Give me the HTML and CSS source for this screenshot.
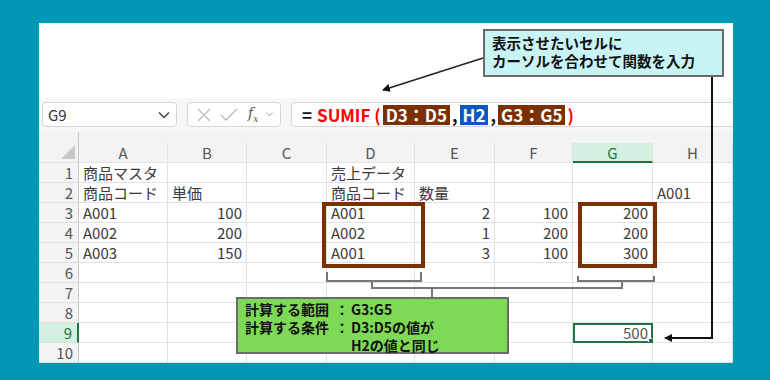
FILE: index.html
```html
<!DOCTYPE html>
<html lang="ja">
<head>
    <meta charset="UTF-8">
    <title>SUMIF</title>
    <link rel="stylesheet" href="styles.css">
</head>
<body>

<div class="frame">
    <div class="top"></div>

    <div class="fbar">
        <div class="namebox">
            <span>G9</span>
            <svg width="12" height="8" viewBox="0 0 12 8"><polyline points="1,1.5 6,6.5 11,1.5" fill="none" stroke="#444" stroke-width="1.5"/></svg>
        </div>
        <div class="fxbox">
            <svg width="16" height="16" viewBox="0 0 16 16"><path d="M2 2 L14 14 M14 2 L2 14" stroke="#bbb" stroke-width="1.3"/></svg>
            <svg width="18" height="16" viewBox="0 0 18 16"><polyline points="1,8 6,13 17,2" fill="none" stroke="#bbb" stroke-width="1.3"/></svg>
            <span class="fx">f<sub>x</sub></span>
            <svg width="7" height="5" viewBox="0 0 7 5"><polyline points="0.5,0.5 3.5,4 6.5,0.5" fill="none" stroke="#aaa" stroke-width="1"/></svg>
        </div>
        <div class="formula">
            <span class="eq">=</span>
            <span class="fn">SUMIF (</span>
            <span class="ref brown">D3：D5</span><span class="comma">,</span><span class="ref blue">H2</span><span class="comma">,</span><span class="ref brown">G3：G5</span>
            <span class="fn close">)</span>
        </div>
    </div>

    <div class="band"><div class="band-corner"></div></div>

    <div class="sheet">
        <div class="corner"></div>
        <div class="colhead">A</div>
        <div class="colhead">B</div>
        <div class="colhead">C</div>
        <div class="colhead">D</div>
        <div class="colhead">E</div>
        <div class="colhead">F</div>
        <div class="colhead active">G</div>
        <div class="colhead">H</div>

        <div class="rowhead">1</div>
        <div class="cell">商品マスタ</div><div class="cell"></div><div class="cell"></div>
        <div class="cell">売上データ</div><div class="cell"></div><div class="cell"></div><div class="cell"></div><div class="cell"></div>

        <div class="rowhead">2</div>
        <div class="cell">商品コード</div><div class="cell">単価</div><div class="cell"></div>
        <div class="cell">商品コード</div><div class="cell">数量</div><div class="cell"></div><div class="cell"></div><div class="cell">A001</div>

        <div class="rowhead">3</div>
        <div class="cell">A001</div><div class="cell num">100</div><div class="cell"></div>
        <div class="cell">A001</div><div class="cell num">2</div><div class="cell num">100</div><div class="cell num">200</div><div class="cell"></div>

        <div class="rowhead">4</div>
        <div class="cell">A002</div><div class="cell num">200</div><div class="cell"></div>
        <div class="cell">A002</div><div class="cell num">1</div><div class="cell num">200</div><div class="cell num">200</div><div class="cell"></div>

        <div class="rowhead">5</div>
        <div class="cell">A003</div><div class="cell num">150</div><div class="cell"></div>
        <div class="cell">A001</div><div class="cell num">3</div><div class="cell num">100</div><div class="cell num">300</div><div class="cell"></div>

        <div class="rowhead">6</div>
        <div class="cell"></div><div class="cell"></div><div class="cell"></div><div class="cell"></div><div class="cell"></div><div class="cell"></div><div class="cell"></div><div class="cell"></div>
        <div class="rowhead">7</div>
        <div class="cell"></div><div class="cell"></div><div class="cell"></div><div class="cell"></div><div class="cell"></div><div class="cell"></div><div class="cell"></div><div class="cell"></div>
        <div class="rowhead">8</div>
        <div class="cell"></div><div class="cell"></div><div class="cell"></div><div class="cell"></div><div class="cell"></div><div class="cell"></div><div class="cell"></div><div class="cell"></div>

        <div class="rowhead active">9</div>
        <div class="cell"></div><div class="cell"></div><div class="cell"></div><div class="cell"></div><div class="cell"></div><div class="cell"></div>
        <div class="cell num selected">500</div><div class="cell"></div>

        <div class="rowhead">10</div>
        <div class="cell"></div><div class="cell"></div><div class="cell"></div><div class="cell"></div><div class="cell"></div><div class="cell"></div><div class="cell"></div><div class="cell"></div>
    </div>

    <!-- annotations over the sheet -->
    <div class="range range-d"></div>
    <div class="range range-g"></div>

    <svg class="lines" width="694" height="340" viewBox="0 0 694 340">
        <defs>
            <marker id="head" markerWidth="8" markerHeight="8" refX="7" refY="4" orient="auto" markerUnits="userSpaceOnUse">
                <path d="M0 0 L8 4 L0 8 Z" fill="#111"/>
            </marker>
        </defs>
        <line x1="444" y1="35" x2="344" y2="67" stroke="#222" stroke-width="1.5" marker-end="url(#head)"/>
        <polyline points="673,54 673,315 626,315" fill="none" stroke="#111" stroke-width="2" marker-end="url(#head)"/>
        <polyline points="288,249 288,258 382,258 382,249" fill="none" stroke="#777" stroke-width="2"/>
        <polyline points="539,253 539,258 615,258 615,253" fill="none" stroke="#777" stroke-width="2"/>
        <polyline points="333,258 333,265 583,265 583,258" fill="none" stroke="#777" stroke-width="2"/>
        <line x1="393" y1="265" x2="393" y2="274" stroke="#777" stroke-width="2"/>
    </svg>

    <div class="note note-cyan">
        <div>表示させたいセルに</div>
        <div>カーソルを合わせて関数を入力</div>
    </div>

    <div class="note note-green">
        <span>計算する範囲</span><span class="colon">：</span><span>G3:G5</span>
        <span>計算する条件</span><span class="colon">：</span><span>D3:D5の値が</span>
        <span></span><span></span><span>H2の値と同じ</span>
    </div>
</div>

</body>
</html>
```

FILE: styles.css
```css
body {
    margin: 0;
    background-color: #0097b2;
    font-family: "Noto Sans CJK JP", "Noto Sans", sans-serif;
}
.frame {
    position: relative;
    width: 694px;
    height: 340px;
    margin: 23px 0 0 39px;
    background-color: #fff;
    overflow: hidden;
}
.top {
    height: 75px;
}
.fbar {
    height: 34px;
    box-sizing: border-box;
    padding: 4px 0 0 3px;
    display: flex;
    gap: 10px;
    background-color: #f7f7f7;
}
.namebox,
.fxbox,
.formula {
    height: 25px;
    box-sizing: border-box;
    background-color: #fff;
    border: 1px solid #d6d6d6;
    border-radius: 4px;
    display: flex;
    align-items: center;
}
.namebox {
    width: 135px;
    padding: 0 6px 0 5px;
    justify-content: space-between;
    font-size: 15px;
    color: #333;
}
.fxbox {
    width: 94px;
    padding: 0 4px 0 8px;
    gap: 8px;
}
.fx {
    font-family: "DejaVu Serif", serif;
    font-style: italic;
    font-size: 14px;
    color: #555;
    margin-left: 2px;
}
.fx sub {
    font-size: 9px;
}
.formula {
    flex: 1;
    margin-right: -6px;
    padding-left: 10px;
    font-weight: bold;
    font-size: 17px;
    white-space: pre;
}
.eq {
    color: #111;
    margin-right: 5px;
}
.fn {
    color: #f00;
    margin-right: 2px;
}
.fn.close {
    margin-left: 2px;
}
.ref {
    color: #fff;
    padding: 0 3px;
    line-height: 20px;
}
.brown {
    background-color: #7b3003;
}
.blue {
    background-color: #0b58c2;
}
.comma {
    color: #111;
    margin: 0 2px;
}
.band {
    height: 11px;
    background-color: #f3f3f3;
}
.band-corner {
    width: 40px;
    height: 11px;
    box-sizing: border-box;
    border-right: 1px solid #c8c8c8;
}
.sheet {
    display: grid;
    grid-template-columns: 40px 89px 79px 80px 88px 80px 78px 80px 80px;
    grid-auto-rows: 20px;
    font-size: 15px;
    color: #3a3a3a;
}
.sheet > div {
    box-sizing: border-box;
    border-right: 1px solid #e1e1e1;
    border-bottom: 1px solid #e1e1e1;
    line-height: 19px;
    white-space: nowrap;
    overflow: hidden;
}
.corner {
    position: relative;
    background-color: #f3f3f3;
    border-right-color: #c8c8c8 !important;
}
.corner::after {
    content: "";
    position: absolute;
    right: 3px;
    bottom: 3px;
    border-style: solid;
    border-width: 0 0 14px 14px;
    border-color: transparent transparent #c8c8c8 transparent;
}
.colhead {
    background-color: #f3f3f3;
    text-align: center;
    color: #555;
}
.colhead.active {
    background-color: #d3f0e0;
    color: #217346;
    border-bottom: 2px solid #217346 !important;
}
.rowhead {
    background-color: #f3f3f3;
    text-align: right;
    padding-right: 5px;
    color: #555;
    border-right-color: #c8c8c8 !important;
}
.rowhead.active {
    background-color: #d3f0e0;
    color: #217346;
    border-right: 2px solid #217346 !important;
}
.cell {
    padding: 0 4px;
}
.num {
    text-align: right;
}
.selected {
    position: relative;
    outline: 2px solid #217346;
    outline-offset: -2px;
    color: #555;
}
.selected::after {
    content: "";
    position: absolute;
    right: -3px;
    bottom: -3px;
    width: 5px;
    height: 5px;
    background-color: #217346;
    border: 1px solid #fff;
}
.range {
    position: absolute;
    top: 179px;
    height: 66px;
    box-sizing: border-box;
    border: 4px solid #7b3003;
}
.range-d {
    left: 283px;
    width: 103px;
}
.range-g {
    left: 539px;
    width: 79px;
}
.lines {
    position: absolute;
    left: 0;
    top: 0;
}
.note {
    position: absolute;
    box-sizing: border-box;
    border: 2px solid #6b6b6b;
    font-weight: bold;
    color: #111;
}
.note-cyan {
    left: 444px;
    top: 6px;
    width: 241px;
    height: 48px;
    padding: 3px 0 0 7px;
    background-color: #c9f4f4;
    font-size: 14.5px;
    line-height: 18px;
}
.note-green {
    left: 197px;
    top: 274px;
    width: 273px;
    height: 57px;
    padding: 1px 0 0 7px;
    background-color: #7ed957;
    font-size: 14px;
    line-height: 18px;
    display: grid;
    grid-template-columns: 88px 14px auto;
    column-gap: 2px;
    align-content: start;
}
.colon {
    text-align: center;
}
```
